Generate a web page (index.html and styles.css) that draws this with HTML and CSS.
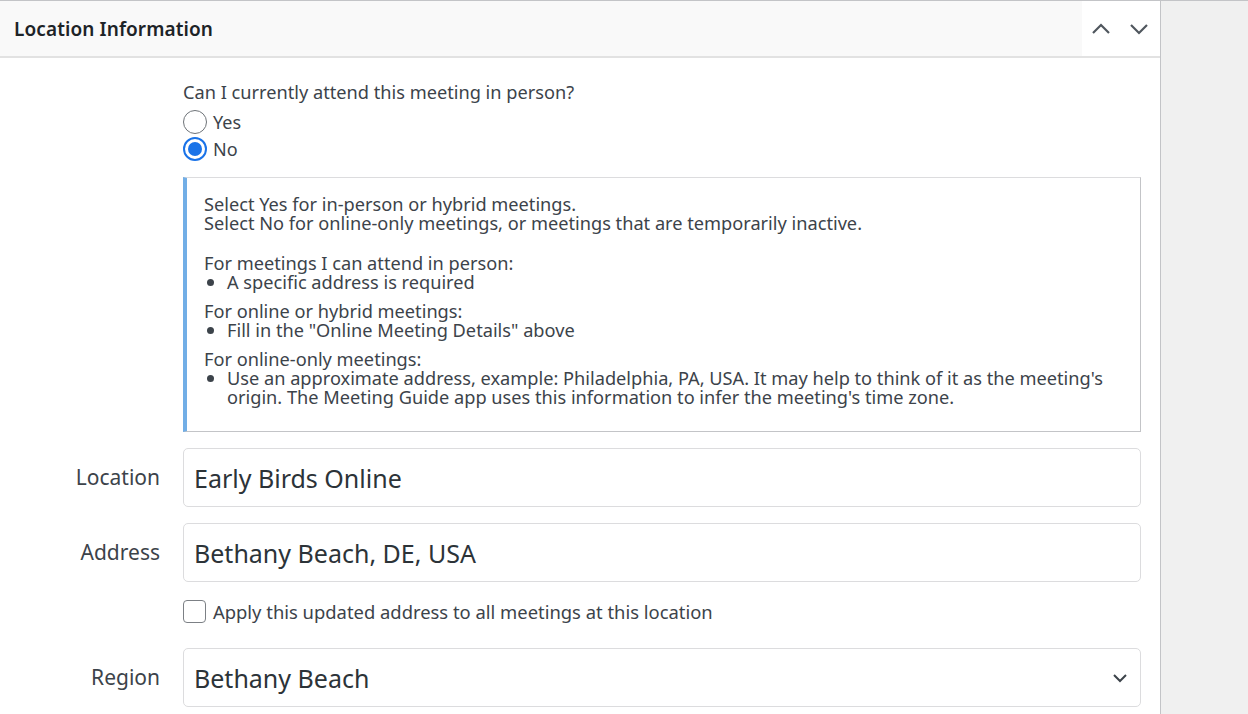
FILE: index.html
```html
<!DOCTYPE html>
<html>
<head>
<meta charset="utf-8">
<link rel="stylesheet" href="styles.css">
</head>
<body>
<div class="screen">
  <div class="panel">
    <div class="panel-header">
      <h2 class="panel-title">Location Information</h2>
      <div class="panel-actions">
        <button class="handle-btn" aria-label="Move up">
          <svg width="20" height="20" viewBox="0 0 20 20"><path d="M2 14 L10 6 L18 14" fill="none" stroke="#50575e" stroke-width="2.2"/></svg>
        </button>
        <button class="handle-btn" aria-label="Move down">
          <svg width="20" height="20" viewBox="0 0 20 20"><path d="M2 6 L10 14 L18 6" fill="none" stroke="#50575e" stroke-width="2.2"/></svg>
        </button>
      </div>
    </div>
    <div class="panel-body">
      <div class="label-col"></div>
      <div class="field-col">
        <div class="question">Can I currently attend this meeting in person?</div>
        <label class="radio-row"><span class="radio"></span>Yes</label>
        <label class="radio-row"><span class="radio checked"></span>No</label>
        <div class="notice">
          <p class="intro">Select Yes for in-person or hybrid meetings.<br>Select No for online-only meetings, or meetings that are temporarily inactive.</p>
          <p>For meetings I can attend in person:</p>
          <ul><li>A specific address is required</li></ul>
          <p>For online or hybrid meetings:</p>
          <ul><li>Fill in the "Online Meeting Details" above</li></ul>
          <p>For online-only meetings:</p>
          <ul class="last"><li>Use an approximate address, example: Philadelphia, PA, USA. It may help to think of it as the meeting's origin. The Meeting Guide app uses this information to infer the meeting's time zone.</li></ul>
        </div>
      </div>

      <div class="label-col field-label">Location</div>
      <div class="field-col"><div class="input">Early Birds Online</div></div>

      <div class="label-col field-label">Address</div>
      <div class="field-col">
        <div class="input">Bethany Beach, DE, USA</div>
        <label class="check-row"><span class="checkbox"></span>Apply this updated address to all meetings at this location</label>
      </div>

      <div class="label-col field-label">Region</div>
      <div class="field-col">
        <div class="input select">Bethany Beach
          <svg class="select-arrow" width="16" height="16" viewBox="0 0 16 16"><path d="M2 5 L8 11 L14 5" fill="none" stroke="#3c434a" stroke-width="2"/></svg>
        </div>
      </div>
    </div>
  </div>
</div>
</body>
</html>
```

FILE: styles.css
```css
* { box-sizing: border-box; }
html, body {
  margin: 0;
  padding: 0;
  height: 714px;
  overflow: hidden;
}
body {
  background: #f0f0f0;
  font-family: "Noto Sans", "Open Sans", sans-serif;
  color: #3c434a;
}
.screen {
  border-top: 1px solid #c3c4c7;
  height: 714px;
}
.panel {
  width: 1161px;
  height: 713px;
  background: #fff;
  border-right: 1px solid #c3c4c7;
}
.panel-header {
  display: flex;
  align-items: stretch;
  height: 57px;
  background: #f9f9f9;
  border-bottom: 2px solid #e2e2e2;
}
.panel-title {
  flex: 1;
  margin: 0;
  padding: 0 14px;
  display: flex;
  align-items: center;
  font-size: 19px;
  font-weight: 600;
  color: #1d2327;
  letter-spacing: 0.1px;
}
.panel-actions {
  display: flex;
  background: #fff;
  padding-right: 2px;
}
.handle-btn {
  width: 38px;
  border: 0;
  background: transparent;
  padding: 0;
  display: flex;
  align-items: center;
  justify-content: center;
}
.panel-body {
  display: grid;
  grid-template-columns: 160px 1fr;
  column-gap: 23px;
  row-gap: 16px;
  padding: 24px 19px 0 0;
  align-items: start;
}
.label-col { text-align: right; }
.field-label {
  font-size: 21px;
  color: #3c434a;
  height: 59px;
  line-height: 59px;
}
.question {
  font-size: 18.2px;
  line-height: 20px;
  margin-bottom: 6px;
}
.radio-row {
  display: flex;
  align-items: center;
  height: 27px;
  font-size: 18px;
}
.radio {
  width: 24px;
  height: 24px;
  border-radius: 50%;
  border: 1.5px solid #6e7378;
  margin-right: 6px;
  display: inline-block;
  position: relative;
}
.radio.checked {
  border: 2px solid #1a73e8;
}
.radio.checked::after {
  content: "";
  position: absolute;
  left: 3px;
  top: 3px;
  width: 14px;
  height: 14px;
  border-radius: 50%;
  background: #1a73e8;
}
.notice {
  margin-top: 15px;
  border: 1px solid #c3c4c7;
  border-top-color: #dcdcde;
  border-left: 4px solid #72aee6;
  padding: 17px 17px 26px 17px;
  font-size: 18.2px;
  line-height: 19px;
  height: 255px;
}
.notice p { margin: 0; }
.notice p.intro { margin-bottom: 21px; }
.notice ul {
  margin: 0 0 10px 0;
  padding-left: 23px;
}
.notice ul.last { margin-bottom: 0; }
.notice li::marker { font-size: 19px; }
.input {
  height: 59px;
  border: 1px solid #dcdcde;
  border-radius: 5px;
  padding: 0 10px;
  display: flex;
  align-items: center;
  font-size: 25px;
  color: #2c3338;
}
.select {
  justify-content: space-between;
  padding-right: 12px;
}
.check-row {
  display: flex;
  align-items: center;
  margin-top: 18px;
  height: 23px;
  font-size: 18.4px;
  margin-bottom: 9px;
}
.checkbox {
  width: 23px;
  height: 23px;
  border: 1.5px solid #7c8085;
  border-radius: 4px;
  margin-right: 7px;
}
```
